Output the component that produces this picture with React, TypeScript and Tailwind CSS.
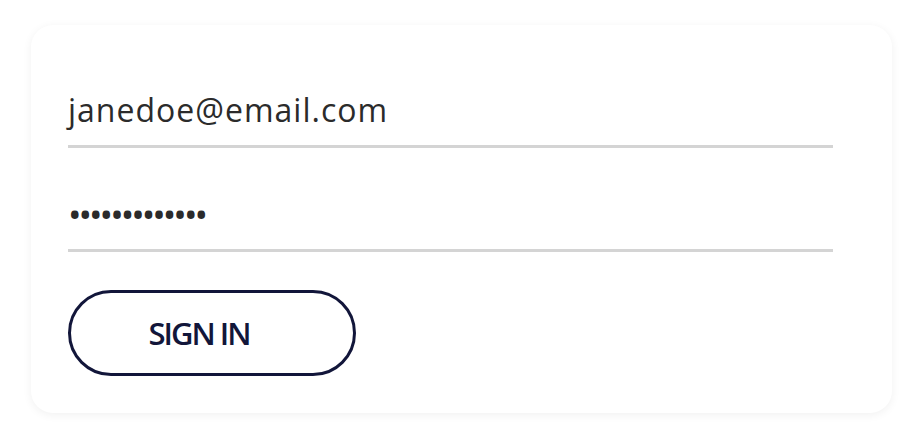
export default function App() {
  return (
    <div className="min-h-screen bg-white pt-[25px] pl-[31px]" style={{ fontFamily: '"Open Sans", sans-serif' }}>
      <div className="w-[861px] h-[388px] rounded-[22px] bg-white shadow-[0_2px_10px_rgba(0,0,0,0.06)] pl-[37px] pt-[65px]">
        {/* email */}
        <div className="w-[765px] border-b-[3px] border-[#d4d4d4] pb-[15px]">
          <div className="text-[32px] leading-[40px] tracking-[1px] text-[#2b2b2b]">janedoe@email.com</div>
        </div>

        {/* password */}
        <div className="w-[765px] border-b-[3px] border-[#d4d4d4] pb-[14px] mt-[47px]">
          <div className="text-[36px] leading-[40px] tracking-[-3px] text-[#2b2b2b]">•••••••••••••</div>
        </div>

        <button className="mt-[38px] w-[288px] h-[86px] rounded-full border-[3px] border-[#12163a] text-[#12163a] text-[31px] font-semibold tracking-[-2px] flex items-center justify-center pr-[26px]">
          SIGN IN
        </button>
      </div>
    </div>
  )
}
